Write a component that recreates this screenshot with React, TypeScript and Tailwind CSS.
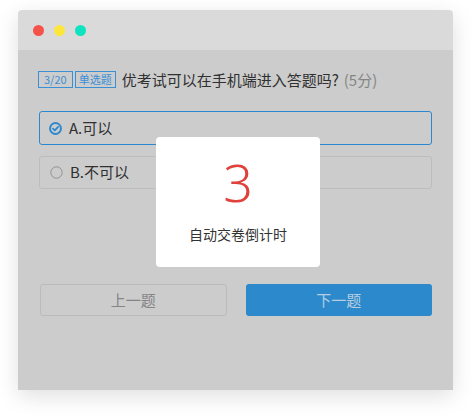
import React from 'react'

const font = { fontFamily: '"Noto Sans CJK SC", "Noto Sans", sans-serif' }

const CheckIcon = () => (
  <svg width="13" height="13" viewBox="0 0 16 16" className="shrink-0">
    <circle cx="8" cy="8" r="6.7" fill="none" stroke="#2b88d0" strokeWidth="2.4" />
    <path d="M4.9 8.2 L7.2 10.4 L11.2 6" fill="none" stroke="#2b88d0" strokeWidth="2.2" strokeLinecap="round" strokeLinejoin="round" />
  </svg>
)

const RadioIcon = () => (
  <svg width="13" height="13" viewBox="0 0 16 16" className="shrink-0">
    <circle cx="8" cy="8" r="7" fill="none" stroke="#8a8a8a" strokeWidth="1.1" />
  </svg>
)

const App = () => {
  return (
    <div className="min-h-screen bg-white pl-[18px] pt-[10px]" style={font}>
      <div className="relative w-[435px] h-[380px] rounded-t-[4px] shadow-[0_6px_22px_rgba(0,0,0,0.13)]">
        {/* title bar */}
        <div className="flex h-[40px] items-center gap-[10px] rounded-t-[4px] bg-[#dadada] pl-[15px]">
          <span className="h-[11px] w-[11px] rounded-full bg-[#f5524a]" />
          <span className="h-[11px] w-[11px] rounded-full bg-[#fde63c]" />
          <span className="h-[11px] w-[11px] rounded-full bg-[#0ee3c0]" />
        </div>

        {/* body */}
        <div className="h-[340px] bg-[#cccccc] px-[21px] pt-[21px]">
          <div className="flex items-center">
            <span className="ml-[-1px] flex h-[17px] items-center border border-[#3a8fd5] px-[5px] text-[11px] leading-none text-[#3a8fd5]">
              3/20
            </span>
            <span className="ml-[2px] flex h-[17px] items-center border border-[#3a8fd5] px-[3px] text-[11px] leading-none text-[#3a8fd5]">
              单选题
            </span>
            <span className="ml-[6px] text-[15px] leading-none text-[#303030]">
              优考试可以在手机端进入答题吗?
            </span>
            <span className="ml-[5px] text-[15px] leading-none text-[#858585]">(5分)</span>
          </div>

          <div className="mt-[23px] flex h-[34px] items-center gap-[7px] rounded-[3px] border border-[#2b88d0] pl-[9px] text-[15px] text-[#303030]">
            <CheckIcon />
            <span>A.可以</span>
          </div>
          <div className="mt-[11px] flex h-[33px] items-center gap-[7px] rounded-[3px] border border-[#bdbdbd] pl-[10px] text-[15px] text-[#303030]">
            <RadioIcon />
            <span>B.不可以</span>
          </div>

          <div className="mt-[95px] flex gap-[19px] pl-[1px]">
            <button className="flex h-[32px] w-[187px] items-center justify-center rounded-[3px] border border-[#bbbbbb] text-[15px] text-[#858585]">
              上一题
            </button>
            <button className="flex h-[32px] w-[187px] items-center justify-center rounded-[3px] bg-[#2b89cc] text-[15px] text-[#b6cde0]">
              下一题
            </button>
          </div>
        </div>

        {/* countdown modal */}
        <div className="absolute left-[138px] top-[127px] flex h-[130px] w-[164px] flex-col items-center rounded-[4px] bg-white">
          <span className="mt-[13px] text-[52px] leading-[64px] text-[#e0413a]" style={{ fontFamily: '"Noto Sans", sans-serif', fontWeight: 300 }}>
            3
          </span>
          <span className="mt-[13px] text-[14px] leading-none text-[#333333]">自动交卷倒计时</span>
        </div>
      </div>
    </div>
  )
}

export default App
